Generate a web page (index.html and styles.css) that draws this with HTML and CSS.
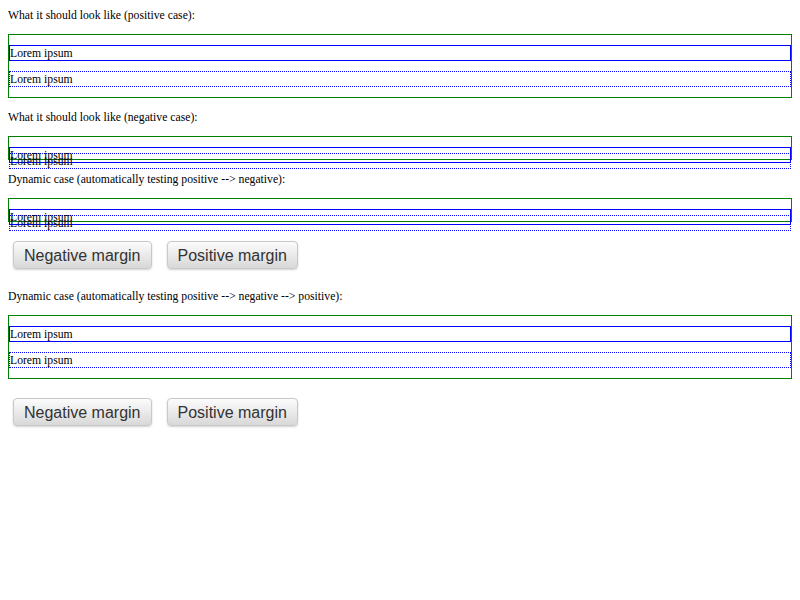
FILE: index.html
```html
<!DOCTYPE html>
<html>
<head>
<meta charset="utf-8">
<title>Margin collapse test</title>
<link rel="stylesheet" href="styles.css">
</head>
<body>
<p class="label first">What it should look like (positive case):</p>
<div class="wrap">
  <div class="solid">Lorem ipsum</div>
  <div class="dotted pos">Lorem ipsum</div>
</div>
<p class="label">What it should look like (negative case):</p>
<div class="wrap">
  <div class="solid">Lorem ipsum</div>
  <div class="dotted neg">Lorem ipsum</div>
</div>
<p class="label">Dynamic case (automatically testing positive --&gt; negative):</p>
<div class="wrap">
  <div class="solid">Lorem ipsum</div>
  <div class="dotted neg">Lorem ipsum</div>
</div>
<div class="controls">
  <button class="btn" type="button">Negative margin</button>
  <button class="btn" type="button">Positive margin</button>
</div>
<p class="label">Dynamic case (automatically testing positive --&gt; negative --&gt; positive):</p>
<div class="wrap">
  <div class="solid">Lorem ipsum</div>
  <div class="dotted pos">Lorem ipsum</div>
</div>
<div class="controls">
  <button class="btn" type="button">Negative margin</button>
  <button class="btn" type="button">Positive margin</button>
</div>
</body>
</html>
```
FILE: styles.css
```css
html {
  background: #ffffff;
}
body {
  margin: 8px;
  font-family: "Liberation Serif", "Times New Roman", serif;
  font-size: 11.7px;
  line-height: 14px;
  color: #000;
}
.label {
  margin: 12px 0 11px;
  padding-top: 1px;
}
.label.first {
  margin-top: 0;
}
.wrap {
  border: 1px solid #008000;
  margin: 11px 0 12px;
}
.solid {
  border: 1px solid #0000ff;
  margin-top: 10px;
  height: 13px;
  padding-top: 1px;
}
.dotted {
  border: 1px dotted #0000ff;
  height: 13px;
  padding-top: 1px;
}
.dotted.pos {
  margin: 10px 0;
}
.dotted.neg {
  margin: -10px 0;
}
.controls {
  display: flex;
  gap: 15px;
  margin: 19px 0 20px 5px;
}
.btn {
  font-family: "Liberation Sans", Arial, sans-serif;
  font-size: 16px;
  line-height: 18px;
  color: #333;
  padding: 5px 10px 3px;
  border: 1px solid #c8c8c8;
  border-radius: 4px;
  background: linear-gradient(#fcfcfc, #d8d8d8);
  box-shadow: 0 1px 2px rgba(0, 0, 0, 0.18);
  margin: 0;
}
```
